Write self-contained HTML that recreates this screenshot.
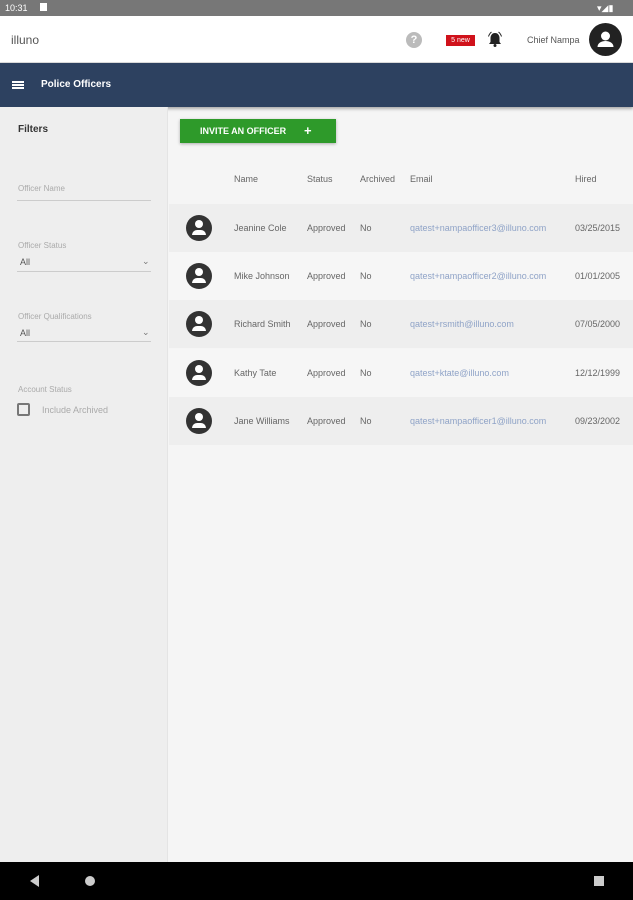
<!DOCTYPE html>
<html><head><style>
*{margin:0;padding:0;box-sizing:border-box}
body{width:633px;height:900px;position:relative;font-family:"Liberation Sans",sans-serif;background:#f5f5f5;overflow:hidden;font-size:9px;color:#555}
.a{position:absolute}
.sb{left:0;top:0;width:633px;height:16px;background:#777;color:#fff;font-size:9px}
.hd{left:0;top:16px;width:633px;height:47px;background:#fff;border-bottom:1px solid #ddd}
.nv{left:0;top:63px;width:633px;height:44px;background:#2d4160;box-shadow:0 2px 3px rgba(0,0,0,.3)}
.side{left:0;top:107px;width:168px;height:755px;background:#eeeeee;border-right:1px solid #e4e4e4}
.lbl{font-size:8px;color:#aaa}
.line{height:1px;background:#ccc;width:134px;left:17px}
.row{left:169px;width:464px;height:48px}
.av{width:26px;height:26px;border-radius:50%;background:#333;left:17px;top:11px}
.c{top:19px;font-size:9px;color:#666}
.em{color:#8fa3c7}
.bn{left:0;top:862px;width:633px;height:38px;background:#000}
</style></head><body>
<div class="a sb"><span class="a" style="left:5px;top:3px">10:31</span><span class="a" style="left:40px;top:3px;width:7px;height:8px;background:#fff"></span><span class="a" style="left:597px;top:3px;width:28px;height:9px;color:#fff;font-size:9px">▾◢▮</span></div>
<div class="a hd">
<span class="a" style="left:11px;top:17px;font-size:12px;color:#555">illuno</span>
<span class="a" style="left:406px;top:16px;width:16px;height:16px;border-radius:50%;background:#bbb;color:#fff;font-size:11px;text-align:center;line-height:16px;font-weight:bold">?</span>
<span class="a" style="left:446px;top:19px;width:29px;height:11px;background:#d0121b;color:#fff;font-size:7px;text-align:center;line-height:11px">5 new</span>
<svg class="a" style="left:486px;top:14px" width="18" height="18" viewBox="0 0 18 18"><path d="M9 3c-3 0-4.5 2.5-4.5 5v4L3 14h12l-1.5-2V8C13.5 5.5 12 3 9 3z" fill="#222"/><circle cx="9" cy="15.5" r="1.5" fill="#222"/><path d="M2.5 6.5Q3.5 3.5 5.5 2M15.5 6.5Q14.5 3.5 12.5 2" stroke="#222" fill="none"/></svg>
<span class="a" style="left:527px;top:19px;font-size:9px;color:#555">Chief Nampa</span>
<svg class="a" style="left:589px;top:7px" width="33" height="33" viewBox="0 0 33 33"><circle cx="16.5" cy="16.5" r="16.5" fill="#222"/><circle cx="16.5" cy="13" r="4.5" fill="#fff"/><path d="M8.5 24c0-4 4-6 8-6s8 2 8 6z" fill="#fff"/></svg>
</div>
<div class="a nv"><span class="a" style="left:12px;top:18px;width:12px;height:2px;background:#fff;box-shadow:0 3px 0 #fff,0 6px 0 #fff"></span><span class="a" style="left:41px;top:16px;color:#fff;font-size:10px;font-weight:bold">Police Officers</span></div>
<div class="a side">
<span class="a" style="left:18px;top:17px;font-size:10px;font-weight:bold;color:#333">Filters</span>
<span class="a lbl" style="left:18px;top:77px">Officer Name</span>
<div class="a line" style="top:93px"></div>
<span class="a lbl" style="left:18px;top:134px">Officer Status</span>
<span class="a" style="left:20px;top:150px;font-size:9px;color:#555">All</span><span class="a" style="left:142px;top:149px;color:#777">⌄</span>
<div class="a line" style="top:164px"></div>
<span class="a lbl" style="left:18px;top:205px">Officer Qualifications</span>
<span class="a" style="left:20px;top:221px;font-size:9px;color:#555">All</span><span class="a" style="left:142px;top:220px;color:#777">⌄</span>
<div class="a line" style="top:234px"></div>
<span class="a lbl" style="left:18px;top:278px">Account Status</span>
<span class="a" style="left:17px;top:296px;width:13px;height:13px;border:2px solid #777;border-radius:2px"></span>
<span class="a lbl" style="left:42px;top:298px;font-size:9px">Include Archived</span>
</div>
<div class="a" style="left:180px;top:119px;width:156px;height:24px;background:#2e9a2a;box-shadow:0 1px 3px rgba(0,0,0,.3);color:#fff;font-size:9px;font-weight:bold;line-height:24px"><span style="position:absolute;left:20px">INVITE AN OFFICER</span><span style="position:absolute;left:124px;font-size:13px">+</span></div>
<div class="a row" style="top:155px;background:#f5f5f5"><span class="a c" style="left:65px;top:19px">Name</span><span class="a c" style="left:138px">Status</span><span class="a c" style="left:191px">Archived</span><span class="a c" style="left:241px">Email</span><span class="a c" style="left:406px">Hired</span></div>
<div class="a row" style="top:204px;background:#eeeeee"><div class="a av"></div><span class="a c" style="left:65px">Jeanine Cole</span><span class="a c" style="left:138px">Approved</span><span class="a c" style="left:191px">No</span><span class="a c em" style="left:241px">qatest+nampaofficer3@illuno.com</span><span class="a c" style="left:406px">03/25/2015</span></div>
<div class="a row" style="top:252px;background:#f6f6f6"><div class="a av"></div><span class="a c" style="left:65px">Mike Johnson</span><span class="a c" style="left:138px">Approved</span><span class="a c" style="left:191px">No</span><span class="a c em" style="left:241px">qatest+nampaofficer2@illuno.com</span><span class="a c" style="left:406px">01/01/2005</span></div>
<div class="a row" style="top:300px;background:#eeeeee"><div class="a av"></div><span class="a c" style="left:65px">Richard Smith</span><span class="a c" style="left:138px">Approved</span><span class="a c" style="left:191px">No</span><span class="a c em" style="left:241px">qatest+rsmith@illuno.com</span><span class="a c" style="left:406px">07/05/2000</span></div>
<div class="a row" style="top:349px;background:#f6f6f6"><div class="a av"></div><span class="a c" style="left:65px">Kathy Tate</span><span class="a c" style="left:138px">Approved</span><span class="a c" style="left:191px">No</span><span class="a c em" style="left:241px">qatest+ktate@illuno.com</span><span class="a c" style="left:406px">12/12/1999</span></div>
<div class="a row" style="top:397px;background:#eeeeee"><div class="a av"></div><span class="a c" style="left:65px">Jane Williams</span><span class="a c" style="left:138px">Approved</span><span class="a c" style="left:191px">No</span><span class="a c em" style="left:241px">qatest+nampaofficer1@illuno.com</span><span class="a c" style="left:406px">09/23/2002</span></div>
<div class="a bn"><span class="a" style="left:30px;top:13px;width:0;height:0;border-top:6px solid transparent;border-bottom:6px solid transparent;border-right:9px solid #ccc"></span><span class="a" style="left:85px;top:14px;width:10px;height:10px;border-radius:50%;background:#ccc"></span><span class="a" style="left:594px;top:14px;width:10px;height:10px;background:#ccc"></span></div>
<style>.av::after{content:"";position:absolute;left:9px;top:5px;width:8px;height:8px;border-radius:50%;background:#fff}.av::before{content:"";position:absolute;left:6px;top:15px;width:14px;height:5px;border-radius:5px 5px 0 0;background:#fff}</style>
</body></html>
